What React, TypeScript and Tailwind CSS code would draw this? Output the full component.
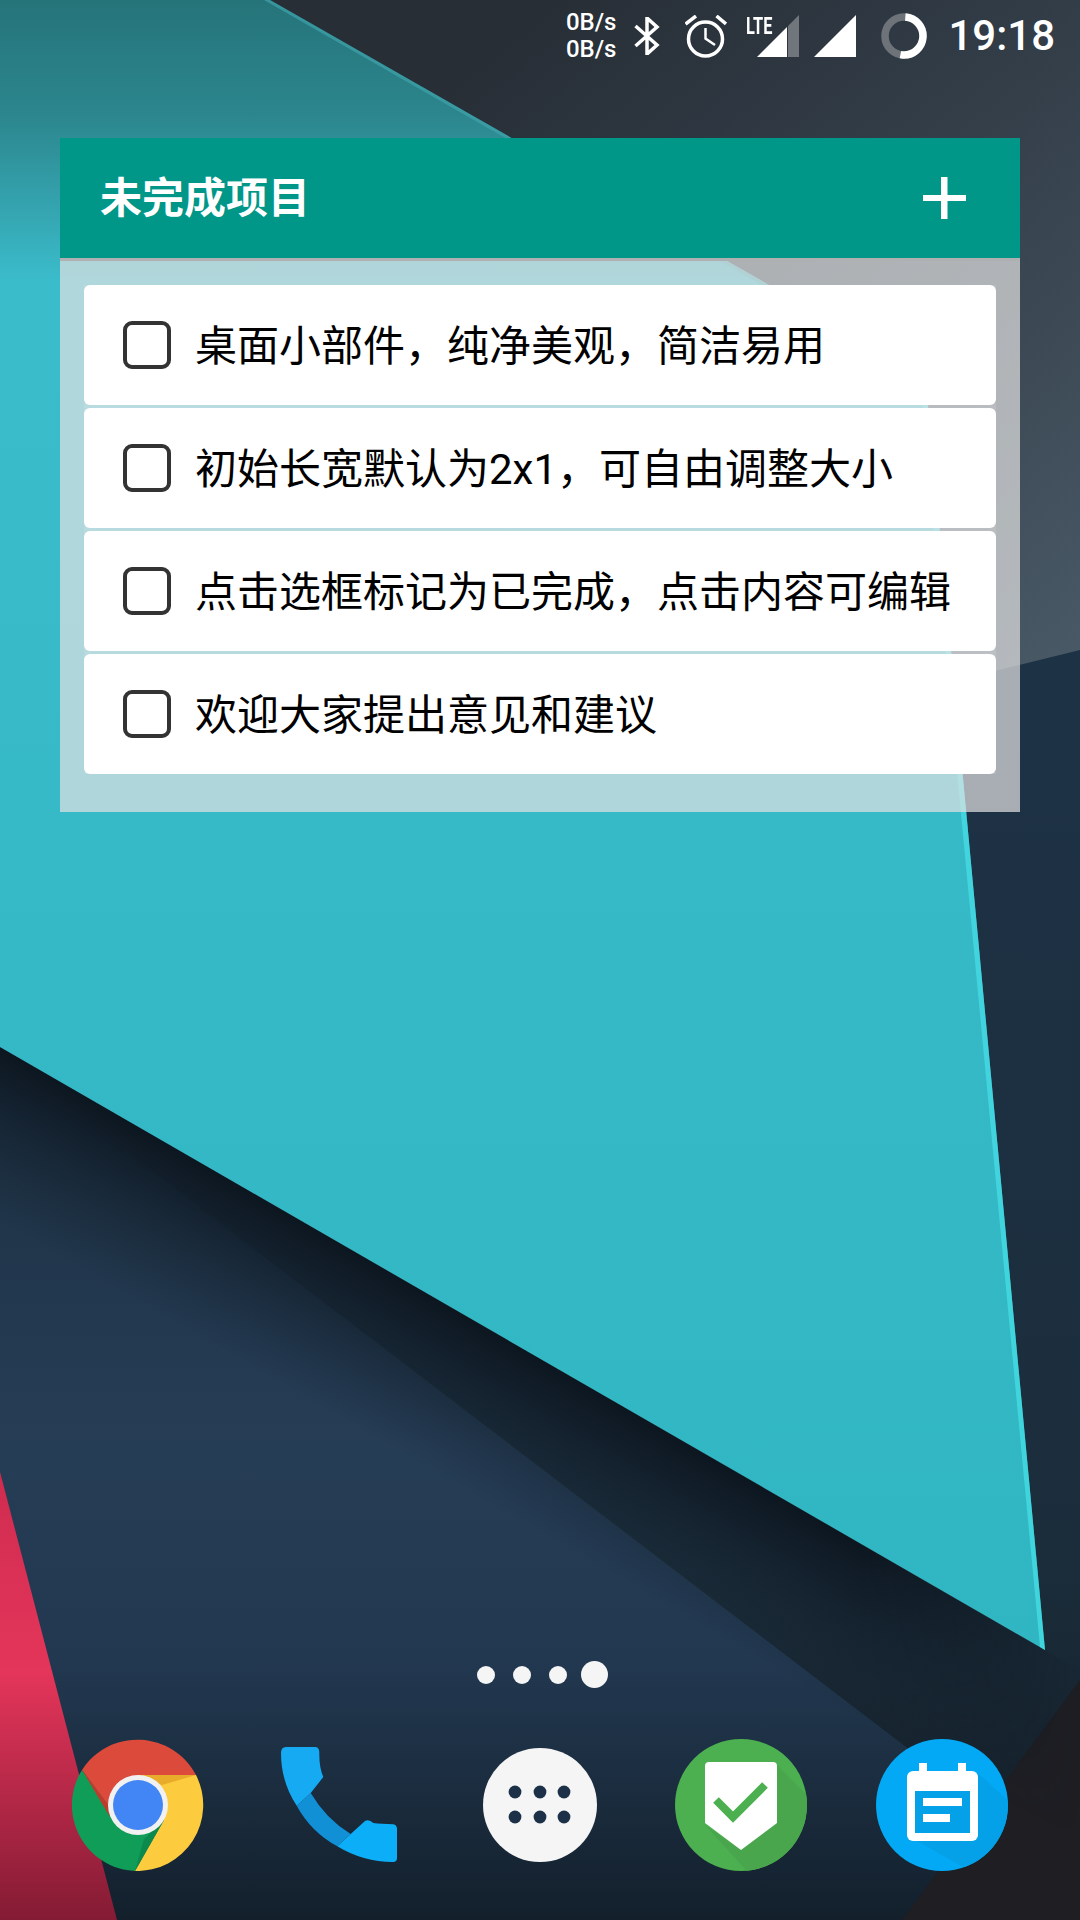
import React from "react";

const todos = [
  "桌面小部件，纯净美观，简洁易用",
  "初始长宽默认为2x1，可自由调整大小",
  "点击选框标记为已完成，点击内容可编辑",
  "欢迎大家提出意见和建议",
];

const Wallpaper = () => (
  <svg className="absolute inset-0" width="1080" height="1920" viewBox="0 0 1080 1920">
    <defs>
      <linearGradient id="grey" gradientUnits="userSpaceOnUse" x1="560" y1="0" x2="1080" y2="640">
        <stop offset="0" stopColor="#272e36" />
        <stop offset="0.45" stopColor="#343f4a" />
        <stop offset="1" stopColor="#485865" />
      </linearGradient>
      <linearGradient id="teal" gradientUnits="userSpaceOnUse" x1="0" y1="0" x2="0" y2="1650">
        <stop offset="0" stopColor="#25747a" />
        <stop offset="0.07" stopColor="#2c868d" />
        <stop offset="0.17" stopColor="#3bbccb" />
        <stop offset="1" stopColor="#30b6c2" />
      </linearGradient>
      <linearGradient id="navyUpper" gradientUnits="userSpaceOnUse" x1="0" y1="700" x2="0" y2="1920">
        <stop offset="0" stopColor="#1e3246" />
        <stop offset="0.7" stopColor="#1b2d3b" />
        <stop offset="1" stopColor="#131c25" />
      </linearGradient>
      <linearGradient id="navyLower" gradientUnits="userSpaceOnUse" x1="0" y1="1060" x2="0" y2="1920">
        <stop offset="0" stopColor="#1c3041" />
        <stop offset="0.45" stopColor="#263d56" />
        <stop offset="0.7" stopColor="#223850" />
        <stop offset="1" stopColor="#13202c" />
      </linearGradient>
      <linearGradient id="red" gradientUnits="userSpaceOnUse" x1="0" y1="1470" x2="0" y2="1920">
        <stop offset="0" stopColor="#cf2c50" />
        <stop offset="0.45" stopColor="#e4355a" />
        <stop offset="1" stopColor="#841b34" />
      </linearGradient>
      <linearGradient id="edgeShadow" gradientUnits="userSpaceOnUse" x1="500" y1="1335" x2="425" y2="1465">
        <stop offset="0" stopColor="#0c151e" stopOpacity="0.95" />
        <stop offset="0.35" stopColor="#0f1a25" stopOpacity="0.6" />
        <stop offset="1" stopColor="#16242f" stopOpacity="0" />
      </linearGradient>
      <linearGradient id="shadowFade" gradientUnits="userSpaceOnUse" x1="0" y1="0" x2="1080" y2="0">
        <stop offset="0.8" stopColor="white" />
        <stop offset="1" stopColor="black" />
      </linearGradient>
      <mask id="shadowMask" maskUnits="userSpaceOnUse" x="0" y="0" width="1080" height="1920">
        <rect width="1080" height="1920" fill="url(#shadowFade)" />
      </mask>
    </defs>
    <rect width="1080" height="1920" fill="url(#grey)" />
    <polygon points="1080,650 950,682 0,1040 0,1920 1080,1920" fill="url(#navyUpper)" />
    <polygon points="0,1055 910,1750 1080,1880 1080,1920 0,1920" fill="url(#navyLower)" />
    <polygon points="1080,1680 902,1920 1080,1920" fill="#1e1e23" />
    <polygon points="0,1472 117,1920 0,1920" fill="url(#red)" />
    <polygon points="0,1047 1200,1740 1125,1880 -80,1186" fill="url(#edgeShadow)" mask="url(#shadowMask)" />
    <polygon points="270,0 925,374 1045,1650 0,1047 0,0" fill="url(#teal)" />
    <polygon points="925,374 1045,1650 1040,1647 919,371" fill="#45dde6" opacity="0.75" />
    <polygon points="270,0 925,374 919,375 264,0" fill="#3fa3ab" opacity="0.7" />
  </svg>
);

const Bluetooth = () => (
  <svg width="26" height="38" viewBox="0 0 26 38" fill="none" stroke="white" strokeWidth="3.5">
    <path d="M1.5 9 L23 28 L13 37 V1 L23 10 L1.5 29" />
  </svg>
);

const Alarm = () => (
  <svg width="42" height="43" viewBox="0 0 42 43" fill="none" stroke="white" strokeWidth="3.5">
    <circle cx="20.5" cy="24" r="17" />
    <path d="M0.5 9 L11 1 M31.5 1 L41 9" />
    <path d="M20.5 13 V23.5 L30 30" strokeWidth="2.5" />
  </svg>
);

const SignalLte = () => (
  <div className="relative w-[53px] h-[42px] ml-[19px]">
    <span className="absolute left-0 -top-[1px] origin-left scale-x-[0.68] text-[24px] leading-[24px] font-bold text-white">LTE</span>
    <svg className="absolute right-0 top-0" width="42" height="42" viewBox="0 0 42 42">
      <polygon points="0,42 30,12 30,42" fill="white" />
      <polygon points="31,11 42,0 42,42 31,42" fill="#70767b" />
    </svg>
  </div>
);

const Signal = () => (
  <svg className="ml-[15px]" width="42" height="42" viewBox="0 0 42 42">
    <polygon points="0,42 42,0 42,42" fill="white" />
  </svg>
);

const BatteryRing = () => (
  <svg className="ml-[25px]" width="46" height="46" viewBox="0 0 46 46" fill="none" strokeWidth="7.5">
    <circle cx="23" cy="23" r="19" stroke="#6d7378" />
    <circle cx="23" cy="23" r="19" stroke="white" pathLength={100} strokeDasharray="52 100" transform="rotate(-86 23 23)" />
  </svg>
);

const StatusBar = () => (
  <div className="flex items-center justify-end h-[72px] pr-[25px] text-white">
    <div className="flex flex-col text-[24px] leading-[27px] font-medium mr-[18px]">
      <span>0B/s</span>
      <span>0B/s</span>
    </div>
    <Bluetooth />
    <div className="ml-[25px]">
      <Alarm />
    </div>
    <SignalLte />
    <Signal />
    <BatteryRing />
    <span className="ml-[21px] text-[42px] leading-none font-medium">19:18</span>
  </div>
);

const TodoRow = ({ text }: { text: string }) => (
  <div className="flex items-center h-[120px] pl-[39px] gap-[24px] rounded-[6px] bg-white">
    <div className="w-[48px] h-[48px] rounded-[9px] border-[4px] border-[#333333]" />
    <span className="pt-[4px] text-[42px] leading-none text-black whitespace-nowrap">{text}</span>
  </div>
);

const TodoWidget = () => (
  <div className="mt-[66px] ml-[60px] w-[960px] h-[674px] bg-[#e2e2e3]/70">
    <div className="flex items-center justify-between h-[120px] pl-[40px] pr-[54px] bg-[#009688]">
      <span className="text-[42px] font-bold text-white">未完成项目</span>
      <svg width="43" height="42" viewBox="0 0 43 42" fill="white">
        <rect x="18" y="0" width="6.5" height="42" />
        <rect x="0" y="18" width="43" height="6" />
      </svg>
    </div>
    <div className="h-[3px] bg-[#aeb0b1]" />
    <div className="flex flex-col gap-[3px] mx-[24px] mt-[24px] bg-white/10">
      {todos.map((t) => (
        <TodoRow key={t} text={t} />
      ))}
    </div>
  </div>
);

const PageDots = () => (
  <div className="flex justify-center items-center mt-auto h-[27px]">
    {[18, 18, 18, 27].map((size, i) => (
      <div key={i} className="flex justify-center items-center w-[36px]">
        <div className="rounded-full bg-[#f5f5f5]" style={{ width: size, height: size }} />
      </div>
    ))}
  </div>
);

const ChromeIcon = () => (
  <svg width="132" height="132" viewBox="0 0 132 132">
    <path d="M63 132 A66 66 0 0 1 10 31 L36 66 L66 66 L92 81 Z" fill="#0f9d58" />
    <path d="M10 31 A66 66 0 0 1 124 36 H66 L36 66 Z" fill="#db4a3a" />
    <path d="M124 36 A66 66 0 0 1 63 132 L92 81 L66 66 L66 36 Z" fill="#fdcb3e" />
    <path d="M66 36 H124 L90 46 Z" fill="#e8ab2a" />
    <path d="M10 31 L36 66 L38 78 Z" fill="#c23a2c" />
    <path d="M63 132 L92 81 L72 100 Z" fill="#0c8a4d" />
    <circle cx="66" cy="66" r="30" fill="#f1f1f1" />
    <circle cx="66" cy="66" r="25" fill="#4285f4" />
  </svg>
);

const PhoneIcon = () => (
  <svg width="116" height="116" viewBox="0 0 116 116">
    <path d="M15.7 58.7 L29.7 46 Q45 72 69.7 87 L56.3 99.3 Q30 85 15.7 58.7 Z" fill="#1190d6" />
    <path d="M0 6 Q0 0 5 0 H34 Q38 0 38.3 5 Q38 20 42.3 30 L29.7 46 L15.7 58.7 Q0 35 0 6 Z" fill="#15aaf2" />
    <path d="M56.3 99.3 L69.7 87 L84 74 Q88 72 92.3 76 Q100 77 112.3 77.3 Q116 78 116 82 V111 Q116 115 112 115 Q82 115 56.3 99.3 Z" fill="#0caef8" />
  </svg>
);

const AppsIcon = () => (
  <svg width="114" height="114" viewBox="0 0 114 114">
    <circle cx="57" cy="57" r="57" fill="#f5f5f5" />
    {[32, 57, 81].map((x) =>
      [44, 69].map((y) => <circle key={`${x}-${y}`} cx={x} cy={y} r="6.4" fill="#1c3047" />)
    )}
  </svg>
);

const ShieldIcon = () => (
  <svg width="132" height="132" viewBox="0 0 132 132">
    <circle cx="66" cy="66" r="66" fill="#4caf50" />
    <clipPath id="shieldClip">
      <circle cx="66" cy="66" r="66" />
    </clipPath>
    <polygon points="102,26 132,56 132,132 72,132 30,86 66,111 102,84" fill="#49a64d" clipPath="url(#shieldClip)" />
    <path d="M30 27 Q30 23 34 23 H98 Q102 23 102 27 V84 L66 111 L30 84 Z" fill="white" />
    <path d="M41 61 L58 78 L90 46" fill="none" stroke="#4caf50" strokeWidth="8" />
  </svg>
);

const CalendarIcon = () => (
  <svg width="132" height="132" viewBox="0 0 132 132">
    <circle cx="66" cy="66" r="66" fill="#03a9f4" />
    <clipPath id="calendarClip">
      <circle cx="66" cy="66" r="66" />
    </clipPath>
    <polygon points="102,34 132,62 132,132 94,132 31,96" fill="#04a0e8" clipPath="url(#calendarClip)" />
    <rect x="43" y="24" width="8" height="12" fill="white" />
    <rect x="82" y="24" width="8" height="12" fill="white" />
    <rect x="31" y="32" width="71" height="70" rx="6" fill="white" />
    <rect x="39" y="52" width="55" height="42" fill="#04a0e8" />
    <rect x="47" y="59" width="39" height="8" fill="white" />
    <rect x="47" y="75" width="27" height="8" fill="white" />
  </svg>
);

const Dock = () => (
  <div className="grid grid-cols-5 w-[1005px] h-[132px] mt-[51px] mb-[49px] ml-[37px]">
    {[ChromeIcon, PhoneIcon, AppsIcon, ShieldIcon, CalendarIcon].map((Icon, i) => (
      <div key={i} className="flex justify-center items-center">
        <Icon />
      </div>
    ))}
  </div>
);

export default function App() {
  return (
    <div className="relative w-[1080px] h-[1920px] overflow-hidden font-['Roboto','Noto_Sans_CJK_SC',sans-serif]">
      <Wallpaper />
      <div className="relative flex flex-col h-full">
        <StatusBar />
        <TodoWidget />
        <PageDots />
        <Dock />
      </div>
    </div>
  );
}
